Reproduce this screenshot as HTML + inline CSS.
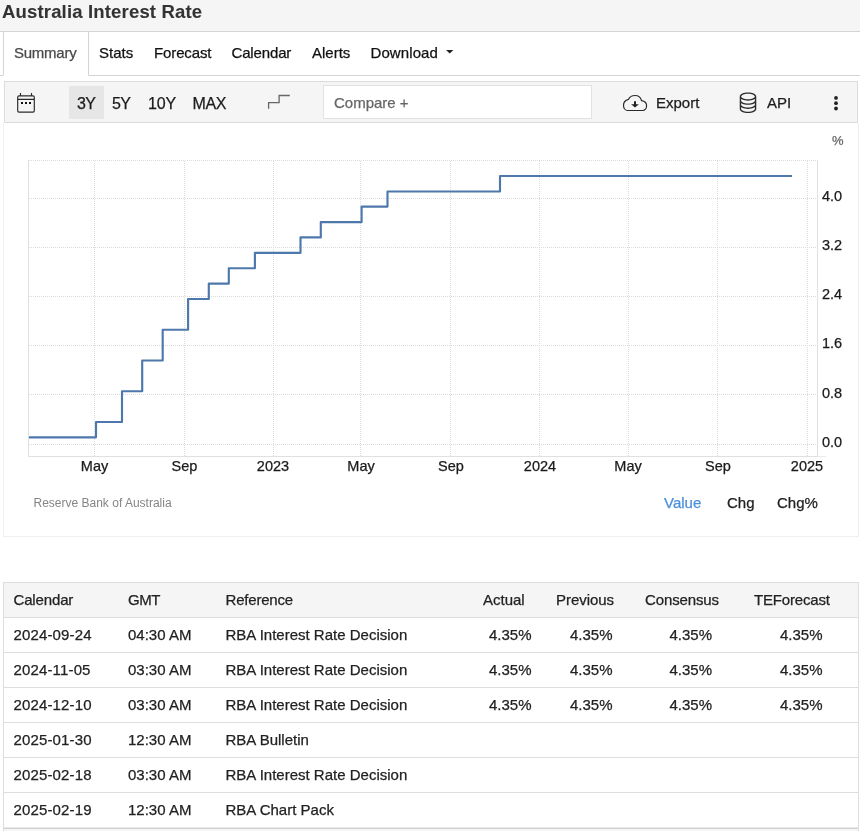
<!DOCTYPE html>
<html>
<head>
<meta charset="utf-8">
<title>Australia Interest Rate</title>
<style>
*{box-sizing:border-box;margin:0;padding:0}
html,body{width:860px;height:831px;overflow:hidden;background:#fff}
body{position:relative;font-family:"Liberation Sans",sans-serif;color:#222;font-size:15px}
.abs{position:absolute;white-space:nowrap;-webkit-text-stroke:0.25px currentColor}
#hdr{left:0;top:0;width:860px;height:32px;background:#f5f5f5;border-bottom:1px solid #d4d4d4}
#title{-webkit-text-stroke:0.08px #333;left:2px;top:0px;font-size:18.5px;font-weight:bold;color:#333;line-height:23px;letter-spacing:0.17px}
.tab{top:32px;height:44px;line-height:42px;font-size:15px;color:#111}
#tabline{left:0;top:75px;width:860px;height:1px;background:#d4d4d4}
#tabact{left:3px;top:31px;width:86px;height:45px;border:1px solid #d4d4d4;border-bottom:1px solid #fff;background:#fff}
#toolbar{left:4px;top:81px;width:854px;height:42px;background:#f5f5f5;border:1px solid #dcdcdc}
.tb{top:83px;height:40px;line-height:42px;font-size:16px;color:#1c1c1c}
#b3y{left:69px;top:86px;width:35px;height:33px;background:#e6e6e6}
#cmp{left:323px;top:85px;width:269px;height:34px;background:#fff;border:1px solid #e2e2e2}
#chartbox{left:3px;top:123px;width:856px;height:414px;border:1px solid #efefef;border-top:none;background:#fff}
.xl{top:457px;width:60px;margin-left:-30px;text-align:center;font-size:14.5px;line-height:18px;color:#1a1a1a}
.yl{left:822px;font-size:14.5px;line-height:18px;color:#1a1a1a}
.tr{left:3px;width:856px;height:36px;border:1px solid #ddd;border-top:none;background:#fff}
.hl{left:4px;width:854px;height:1px;background:#ddd}
.td{font-size:15px;line-height:35px;height:35px;color:#222}
</style>
</head>
<body>
<div id="wrap" style="position:absolute;left:0;top:0;width:860px;height:831px;will-change:transform">
<div id="hdr" class="abs"></div>
<div id="title" class="abs">Australia Interest Rate</div>

<div id="tabline" class="abs"></div>
<div id="tabact" class="abs"></div>
<div class="abs tab" style="left:14px;color:#4a4a4a;letter-spacing:-0.25px">Summary</div>
<div class="abs tab" style="left:99px">Stats</div>
<div class="abs tab" style="left:154px;letter-spacing:-0.12px">Forecast</div>
<div class="abs tab" style="left:231.500px;letter-spacing:-0.15px">Calendar</div>
<div class="abs tab" style="left:312px">Alerts</div>
<div class="abs tab" style="left:370.500px;letter-spacing:0.1px">Download</div>
<svg class="abs" style="left:446px;top:50px" width="8" height="4" viewBox="0 0 8 4"><path d="M0 0h7.4L3.7 3.6z" fill="#222"/></svg>

<div id="toolbar" class="abs"></div>
<svg class="abs" style="left:15px;top:91px" width="24" height="24" viewBox="0 0 24 24" fill="none" stroke="#2a2a2a" stroke-width="1.15">
  <rect x="2.7" y="4.9" width="16.6" height="16.2" rx="1.3"/>
  <path d="M2.7 8.4h16.6M5.5 2.1v2.8M16.5 2.1v2.8" stroke-linecap="butt"/>
  <path d="M6 11h2v1.9H6zM10 11h2v1.9h-2zM14 11h2v1.9h-2z" fill="#111" stroke="none"/>
</svg>
<div id="b3y" class="abs"></div>
<div class="abs tb" style="left:77px;letter-spacing:-0.7px">3Y</div>
<div class="abs tb" style="left:112px;letter-spacing:-0.7px">5Y</div>
<div class="abs tb" style="left:148px;letter-spacing:-0.2px">10Y</div>
<div class="abs tb" style="left:192.500px;letter-spacing:-0.4px">MAX</div>
<svg class="abs" style="left:262px;top:90px" width="34" height="24" viewBox="0 0 34 24" fill="none" stroke="#666" stroke-width="1.3"><path d="M6.6 18.8v-6.1h10.5v-7.2h10.7"/></svg>
<div id="cmp" class="abs"></div>
<div class="abs tb" style="left:334px;top:82px;font-size:15px;color:#666">Compare +</div>

<svg class="abs" style="left:615px;top:88px" width="40" height="28" viewBox="0 0 40 28" fill="none">
  <path d="M12.600 22.500C10.300 22.500 8.500 20.200 8.500 17.200C8.500 14.300 10.600 12 13.500 11.300C14.700 8.900 17.100 7.500 20 7.500C23.300 7.500 25.900 9.600 26.500 12.700C29.400 13.100 31.600 15 31.600 17.600C31.600 20.300 29.900 22.500 27.500 22.500Z" stroke="#2a2a2a" stroke-width="1.2" stroke-linejoin="round"/>
  <path d="M19 13.200h2v3.100h2.900l-3.900 3.200-3.900-3.200h2.900z" fill="#222"/>
</svg>
<div class="abs tb" style="left:656px;top:82px;font-size:15px">Export</div>

<svg class="abs" style="left:737px;top:91px" width="22" height="22" viewBox="0 0 16 16" fill="#2a2a2a"><path d="M4.318 2.687C5.234 2.271 6.536 2 8 2s2.766.27 3.682.687C12.644 3.125 13 3.627 13 4c0 .374-.356.875-1.318 1.313C10.766 5.729 9.464 6 8 6s-2.766-.27-3.682-.687C3.356 4.875 3 4.373 3 4c0-.374.356-.875 1.318-1.313ZM13 5.698V7c0 .374-.356.875-1.318 1.313C10.766 8.729 9.464 9 8 9s-2.766-.27-3.682-.687C3.356 7.875 3 7.373 3 7V5.698c.271.202.58.378.904.525C4.978 6.711 6.427 7 8 7s3.022-.289 4.096-.777A4.920 4.920 0 0 0 13 5.698ZM14 4c0-1.007-.875-1.755-1.904-2.223C11.022 1.289 9.573 1 8 1s-3.022.289-4.096.777C2.875 2.245 2 2.993 2 4v9c0 1.007.875 1.755 1.904 2.223C4.978 15.710 6.427 16 8 16s3.022-.289 4.096-.777C13.125 14.755 14 14.007 14 13V4Zm-1 4.698V10c0 .374-.356.875-1.318 1.313C10.766 11.729 9.464 12 8 12s-2.766-.27-3.682-.687C3.356 10.875 3 10.373 3 10V8.698c.271.202.58.378.904.525C4.978 9.710 6.427 10 8 10s3.022-.289 4.096-.777A4.920 4.920 0 0 0 13 8.698Zm0 3V13c0 .374-.356.875-1.318 1.313C10.766 14.729 9.464 15 8 15s-2.766-.27-3.682-.687C3.356 13.875 3 13.373 3 13v-1.302c.271.202.58.378.904.525C4.978 12.710 6.427 13 8 13s3.022-.289 4.096-.777c.324-.147.633-.323.904-.525Z"/></svg>
<div class="abs tb" style="left:767px;top:82px;font-size:15px">API</div>
<svg class="abs" style="left:830px;top:94px" width="12" height="18" viewBox="0 0 12 18" fill="#222"><circle cx="6" cy="3.900" r="1.900"/><circle cx="6" cy="9.200" r="1.900"/><circle cx="6" cy="14.500" r="1.900"/></svg>

<div id="chartbox" class="abs"></div>
<svg class="abs" style="left:0;top:123px" width="860" height="413" viewBox="0 123 860 413">
  <g stroke="#dcdcdc" stroke-width="1" stroke-dasharray="1 1" fill="none">
    <path d="M29 160.500H818M29 198.500H818M29 247.500H818M29 296.500H818M29 345.500H818M29 394.500H818M29 444.500H818"/>
    <path d="M94.500 161V456M184.500 161V456M273.500 161V456M360.500 161V456M450.500 161V456M539.500 161V456M628.500 161V456M717.500 161V456M807.500 161V456"/>
  </g>
  <path d="M28.500 160V456.500H818" stroke="#e0e0e0" stroke-width="1" fill="none"/><path d="M818 456.500H826" stroke="#ececec" stroke-width="1" fill="none"/>
  <path d="M817.500 160V456" stroke="#e0e0e0" stroke-width="1" fill="none"/>
  <path d="M29 437.300H96V422H122V391.200H142.200V360.500H162.700V329.700H188.100V299H208.800V283.600H228.800V268.200H254.900V252.800H300.500V237.400H320.800V222.100H361.600V206.600H387.500V191.500H500V176H792" stroke="#4e78ac" stroke-width="2.150" fill="none" stroke-linejoin="round" stroke-linecap="butt"/>
</svg>
<div class="abs" style="left:832px;top:133px;font-size:13px;line-height:16px;color:#666">%</div>
<div class="abs yl" style="top:187px">4.0</div>
<div class="abs yl" style="top:236px">3.2</div>
<div class="abs yl" style="top:285px">2.4</div>
<div class="abs yl" style="top:334px">1.6</div>
<div class="abs yl" style="top:384px">0.8</div>
<div class="abs yl" style="top:433px">0.0</div>
<div class="abs xl" style="left:94.500px">May</div>
<div class="abs xl" style="left:184.500px">Sep</div>
<div class="abs xl" style="left:273px">2023</div>
<div class="abs xl" style="left:361px">May</div>
<div class="abs xl" style="left:451px">Sep</div>
<div class="abs xl" style="left:540px">2024</div>
<div class="abs xl" style="left:628px">May</div>
<div class="abs xl" style="left:718px">Sep</div>
<div class="abs xl" style="left:807px">2025</div>
<div class="abs" style="left:33.500px;top:496px;font-size:12px;line-height:15px;color:#858585;-webkit-text-stroke:0">Reserve Bank of Australia</div>
<div class="abs" style="left:664px;top:494px;font-size:15px;line-height:18px;color:#4a90d9">Value</div>
<div class="abs" style="left:727px;top:494px;font-size:15px;line-height:18px;color:#222">Chg</div>
<div class="abs" style="left:777px;top:494px;font-size:15px;line-height:18px;color:#222">Chg%</div>

<!-- table -->
<div class="abs" style="left:3px;top:582px;width:856px;height:249px;border:1px solid #ddd;border-bottom:none;background:#fff"></div>
<div class="abs" style="left:4px;top:583px;width:854px;height:34px;background:#f5f5f5"></div>
<div class="abs hl" style="top:617px"></div>
<div class="abs hl" style="top:652px"></div>
<div class="abs hl" style="top:687px"></div>
<div class="abs hl" style="top:722px"></div>
<div class="abs hl" style="top:757px"></div>
<div class="abs hl" style="top:792px"></div>
<div class="abs hl" style="top:827px;background:#e9e9e9"></div>
<div class="abs hl" style="top:828px;background:#d2d2d2"></div>
<div class="abs" style="left:4px;top:829px;width:854px;height:2px;background:#f5f5f5"></div>

<div class="abs td" style="left:13.500px;top:582px;letter-spacing:-0.15px">Calendar</div>
<div class="abs td" style="left:128px;top:582px;letter-spacing:-0.4px">GMT</div>
<div class="abs td" style="left:225.500px;top:582px;letter-spacing:-0.2px">Reference</div>
<div class="abs td" style="left:483px;top:582px">Actual</div>
<div class="abs td" style="left:556px;top:582px;letter-spacing:-0.05px">Previous</div>
<div class="abs td" style="left:645px;top:582px;letter-spacing:-0.12px">Consensus</div>
<div class="abs td" style="left:754px;top:582px;letter-spacing:-0.18px">TEForecast</div>

<div class="abs td" style="left:13.500px;top:617px;letter-spacing:0.15px">2024-09-24</div>
<div class="abs td" style="left:128px;top:617px">04:30 AM</div>
<div class="abs td" style="left:225.500px;top:617px">RBA Interest Rate Decision</div>
<div class="abs td" style="left:489px;top:617px">4.35%</div>
<div class="abs td" style="left:570px;top:617px">4.35%</div>
<div class="abs td" style="left:669.500px;top:617px">4.35%</div>
<div class="abs td" style="left:780px;top:617px">4.35%</div>

<div class="abs td" style="left:13.500px;top:652px;letter-spacing:0.15px">2024-11-05</div>
<div class="abs td" style="left:128px;top:652px">03:30 AM</div>
<div class="abs td" style="left:225.500px;top:652px">RBA Interest Rate Decision</div>
<div class="abs td" style="left:489px;top:652px">4.35%</div>
<div class="abs td" style="left:570px;top:652px">4.35%</div>
<div class="abs td" style="left:669.500px;top:652px">4.35%</div>
<div class="abs td" style="left:780px;top:652px">4.35%</div>

<div class="abs td" style="left:13.500px;top:687px;letter-spacing:0.15px">2024-12-10</div>
<div class="abs td" style="left:128px;top:687px">03:30 AM</div>
<div class="abs td" style="left:225.500px;top:687px">RBA Interest Rate Decision</div>
<div class="abs td" style="left:489px;top:687px">4.35%</div>
<div class="abs td" style="left:570px;top:687px">4.35%</div>
<div class="abs td" style="left:669.500px;top:687px">4.35%</div>
<div class="abs td" style="left:780px;top:687px">4.35%</div>

<div class="abs td" style="left:13.500px;top:722px;letter-spacing:0.15px">2025-01-30</div>
<div class="abs td" style="left:128px;top:722px">12:30 AM</div>
<div class="abs td" style="left:225.500px;top:722px">RBA Bulletin</div>

<div class="abs td" style="left:13.500px;top:757px;letter-spacing:0.15px">2025-02-18</div>
<div class="abs td" style="left:128px;top:757px">03:30 AM</div>
<div class="abs td" style="left:225.500px;top:757px">RBA Interest Rate Decision</div>

<div class="abs td" style="left:13.500px;top:792px;letter-spacing:0.15px">2025-02-19</div>
<div class="abs td" style="left:128px;top:792px">12:30 AM</div>
<div class="abs td" style="left:225.500px;top:792px">RBA Chart Pack</div>
</div>
</body>
</html>
